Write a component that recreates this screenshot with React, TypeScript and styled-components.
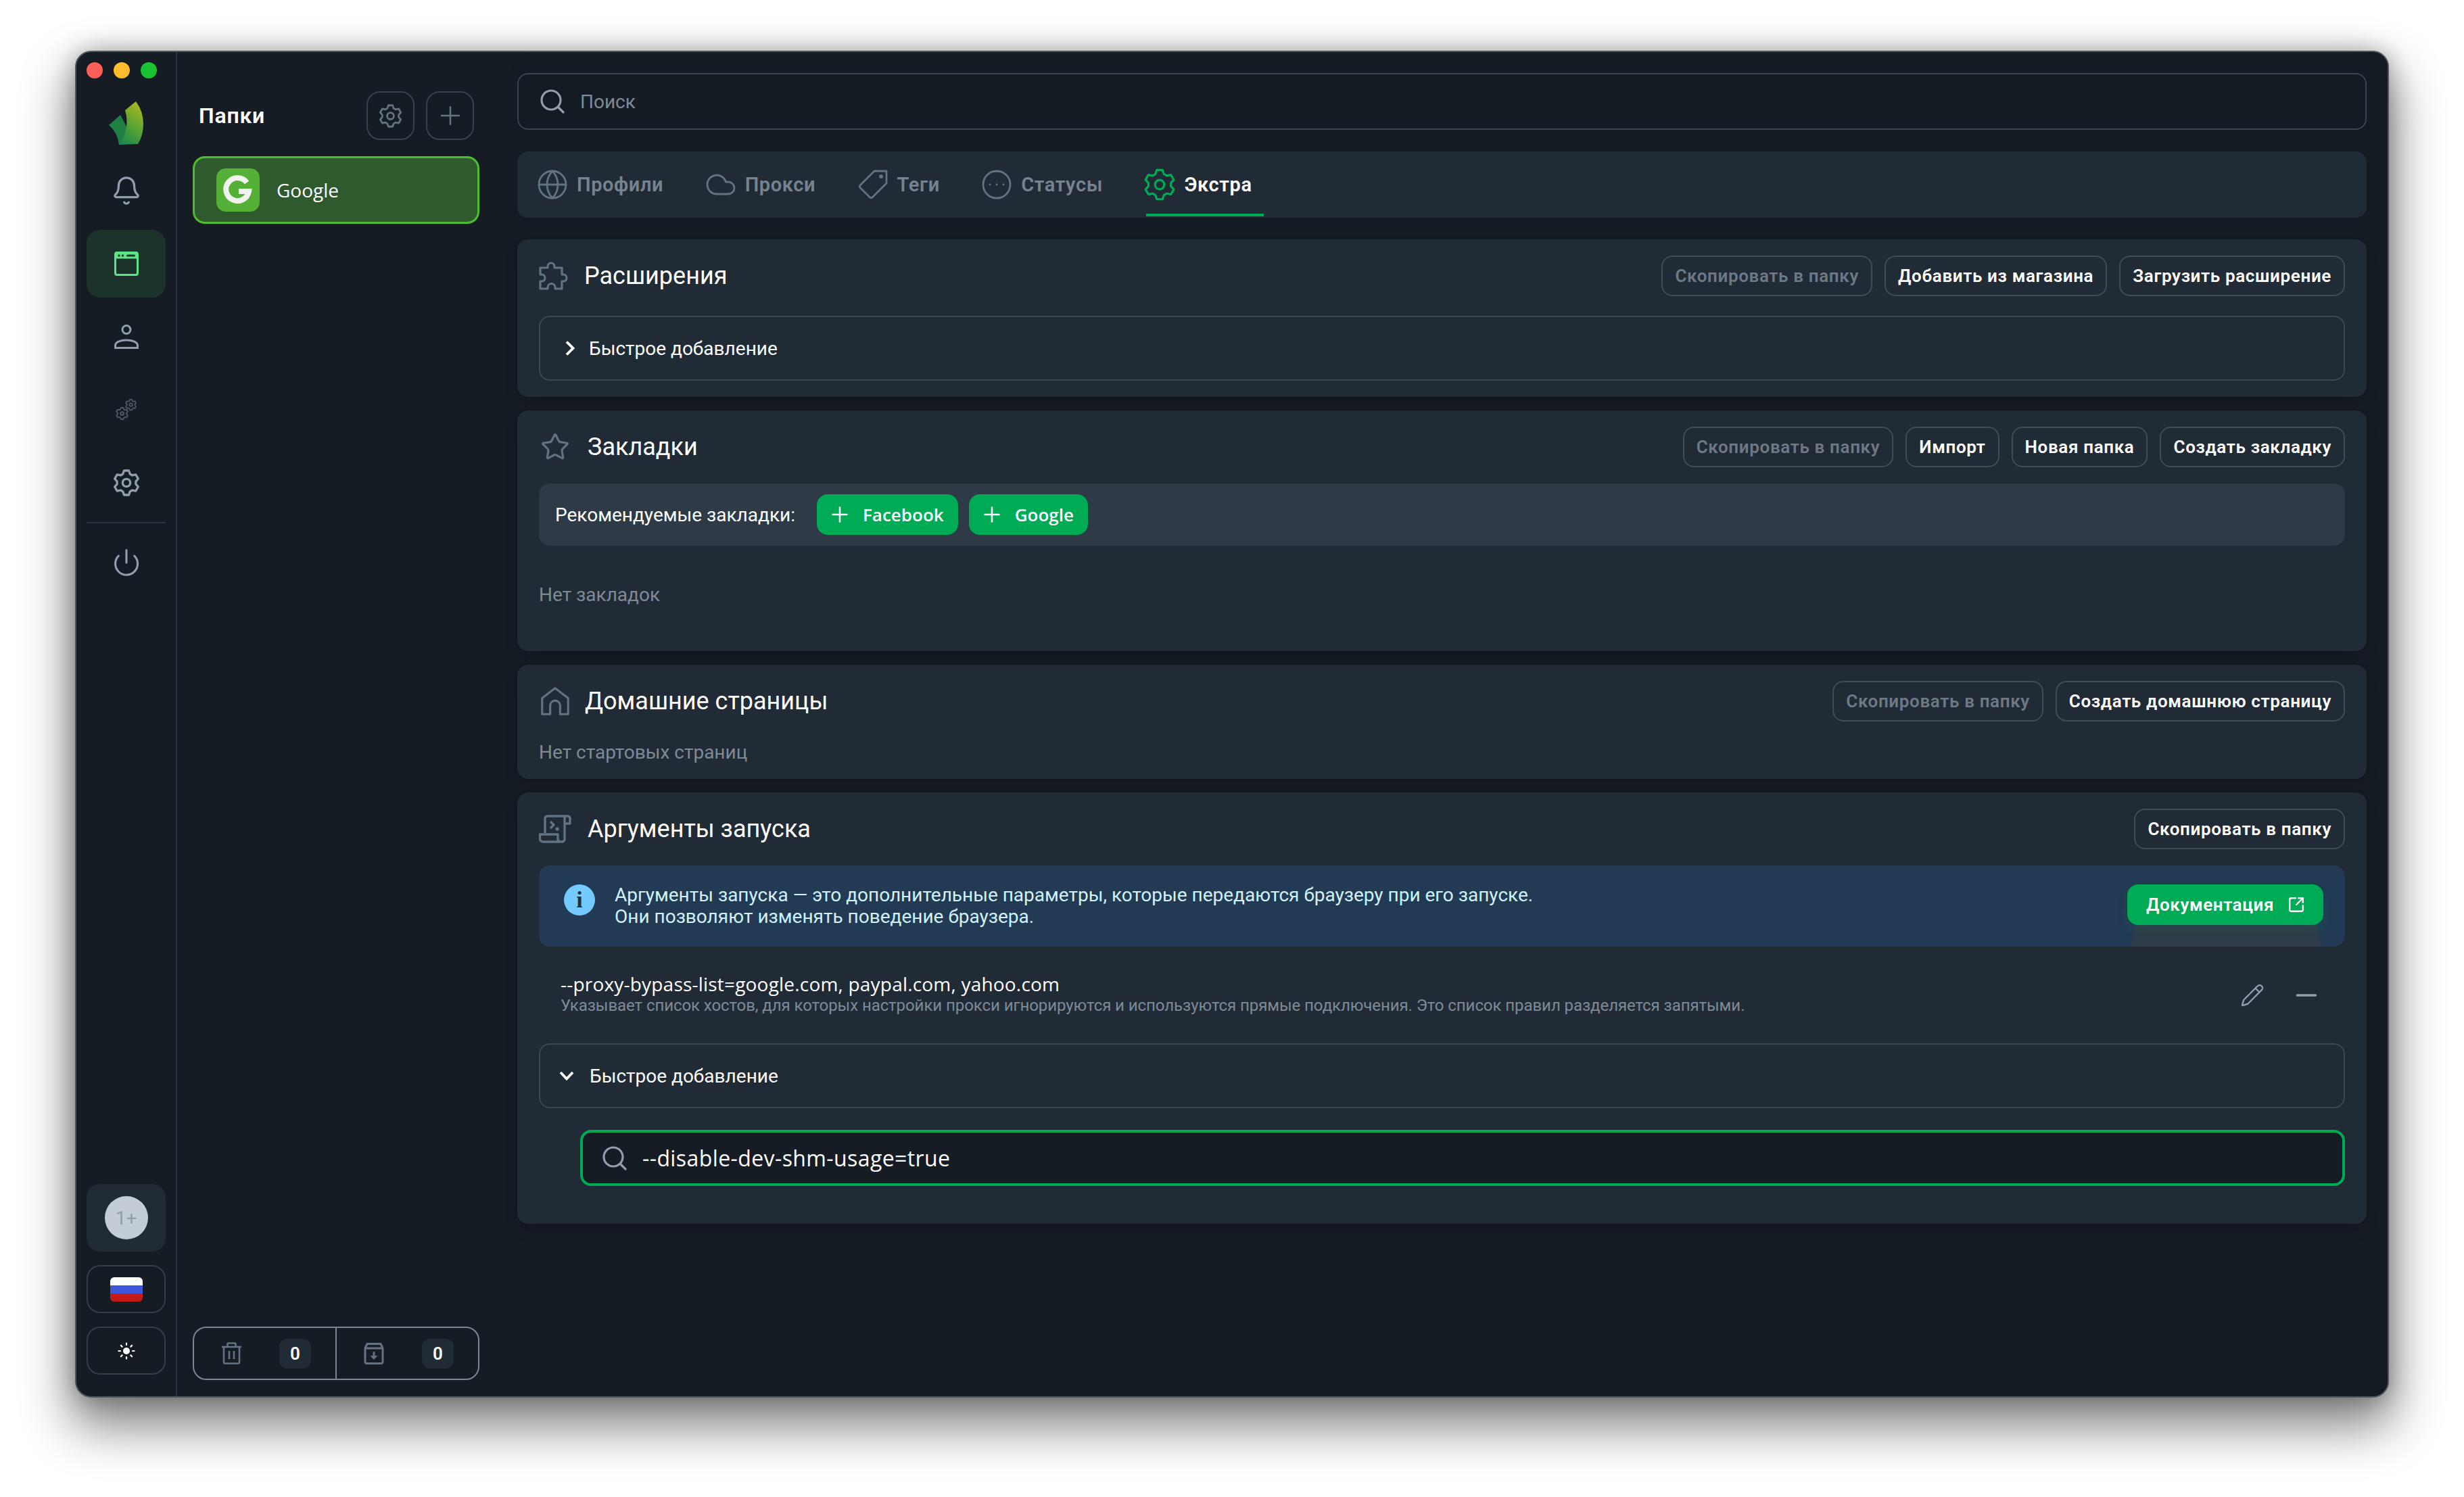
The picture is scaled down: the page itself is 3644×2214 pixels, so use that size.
import { createGlobalStyle, styled } from 'styled-components';
import {
  Bell,
  CircleEllipsis,
  Cloud,
  Globe,
  Minus,
  Pencil,
  Plus,
  Power,
  SquareArrowOutUpRight,
  Star,
} from 'lucide-react';

const FONT = `Roboto, "Noto Sans", sans-serif`;
const LATIN_FONT = `"Open Sans", Roboto, sans-serif`;

const GlobalStyle = createGlobalStyle`
  * { box-sizing: border-box; }
  html, body { margin: 0; background: #fff; }
  body { font-family: ${FONT}; }
`;

const Page = styled.div`
  width: 3644px;
  height: 2214px;
  padding: 75px 0 0 111px;
  background: #fff;
  overflow: hidden;
`;

const Window = styled.div`
  display: flex;
  width: 3422px;
  height: 1992px;
  border: 2px solid #4e555c;
  border-radius: 24px;
  background: #161c24;
  overflow: hidden;
  box-shadow: 0 36px 72px 8px rgba(0, 0, 0, 0.48), 0 0 34px rgba(0, 0, 0, 0.28);
`;

const Rail = styled.aside`
  display: flex;
  flex-direction: column;
  flex: none;
  width: 149px;
  padding: 15px 15px 32px;
  border-right: 2px solid #2a343f;
  color: #919eab;
`;

const Lights = styled.div`
  display: flex;
  gap: 16px;
  height: 24px;
`;

const Light = styled.span<{ $color: string }>`
  width: 24px;
  height: 24px;
  border-radius: 50%;
  background: ${(p) => p.$color};
`;

const LogoBox = styled.div`
  display: flex;
  justify-content: center;
  height: 65px;
  margin: 34px 0 17px;
`;

const NavList = styled.nav`
  display: flex;
  flex-direction: column;
  gap: 8px;
`;

const NavItem = styled.div<{ $active?: boolean; $muted?: boolean }>`
  display: flex;
  align-items: center;
  justify-content: center;
  height: 100px;
  border-radius: 20px;
  background: ${(p) => (p.$active ? '#1b332b' : 'transparent')};
  color: ${(p) => (p.$active ? '#5be584' : p.$muted ? '#4f5a66' : '#919eab')};
`;

const RailDivider = styled.div`
  height: 2px;
  background: #2a343f;
`;

const RailBottom = styled.div`
  display: flex;
  flex-direction: column;
  gap: 20px;
  margin-top: auto;
`;

const AvatarBox = styled.div`
  display: flex;
  align-items: center;
  justify-content: center;
  height: 100px;
  border-radius: 20px;
  background: #212b36;
`;

const Avatar = styled.div`
  display: flex;
  align-items: center;
  justify-content: center;
  width: 64px;
  height: 64px;
  border-radius: 50%;
  background: #c4cdd5;
  color: #919eab;
  font-size: 28px;
`;

const RailButton = styled.div`
  display: flex;
  align-items: center;
  justify-content: center;
  height: 71px;
  border: 2px solid #343d49;
  border-radius: 20px;
  color: #fff;
`;

const Flag = styled.div`
  width: 48px;
  height: 36px;
  border-radius: 6px;
  background: linear-gradient(#fff 0 33.3%, #3f57db 33.3% 66.6%, #c61a17 66.6%);
`;

const Folders = styled.section`
  display: flex;
  flex-direction: column;
  flex: none;
  width: 490px;
  padding: 58px 43px 24px 23px;
`;

const FolderHead = styled.div`
  display: flex;
  align-items: center;
  gap: 17px;
  height: 72px;
  padding: 0 8px 0 9px;
  margin-bottom: 24px;
`;

const FolderTitle = styled.h2`
  flex: 1;
  margin: 0;
  color: #fff;
  font-size: 32px;
  font-weight: 600;
  letter-spacing: 0.8px;
`;

const IconButton = styled.div`
  display: flex;
  align-items: center;
  justify-content: center;
  width: 71px;
  height: 72px;
  border: 2px solid #38414c;
  border-radius: 20px;
  color: #637381;
`;

const FolderItem = styled.div`
  display: flex;
  align-items: center;
  gap: 25px;
  height: 100px;
  padding-left: 32px;
  border: 3px solid #4cbf2e;
  border-radius: 18px;
  background: #2f5a2d;
  color: #fff;
  font-family: ${LATIN_FONT};
  font-size: 28px;
`;

const FolderLogo = styled.div`
  display: flex;
  align-items: center;
  justify-content: center;
  width: 64px;
  height: 64px;
  border-radius: 14px;
  background: #54b036;
`;

const FolderFooter = styled.div`
  display: flex;
  height: 79px;
  margin-top: auto;
  border: 2px solid #7b8793;
  border-radius: 20px;
`;

const FooterCell = styled.div`
  display: flex;
  flex: 1;
  align-items: center;
  justify-content: space-between;
  padding: 0 36px 0 40px;
  color: #637381;

  & + & {
    border-left: 2px solid #7b8793;
  }
`;

const CountBadge = styled.span`
  display: flex;
  align-items: center;
  justify-content: center;
  width: 47px;
  height: 44px;
  border-radius: 12px;
  background: #212b36;
  color: #fff;
  font-size: 26px;
  font-weight: 600;
`;

const Main = styled.main`
  display: flex;
  flex-direction: column;
  flex: 1;
  min-width: 0;
  padding: 31px 31px 0 13px;
  background: #151b23;
  border-top-left-radius: 40px;
`;

const SearchField = styled.label`
  display: flex;
  flex: none;
  align-items: center;
  gap: 23px;
  height: 84px;
  margin-bottom: 32px;
  padding-left: 32px;
  border: 2px solid #3a444f;
  border-radius: 16px;
  color: #919eab;
`;

const SearchInput = styled.input`
  flex: 1;
  padding: 0;
  border: 0;
  outline: 0;
  background: transparent;
  color: #fff;
  font-family: ${FONT};
  font-size: 28px;

  &::placeholder {
    color: #7e8a96;
    opacity: 1;
  }
`;

const TabBar = styled.div`
  display: flex;
  flex: none;
  gap: 47.5px;
  height: 98px;
  margin-bottom: 32px;
  padding-left: 32px;
  border-radius: 16px;
  background: #212b36;
`;

const Tab = styled.div<{ $active?: boolean }>`
  position: relative;
  display: flex;
  align-items: center;
  gap: 16px;
  padding-right: 17px;
  color: ${(p) => (p.$active ? '#fff' : '#77838f')};
  font-size: 29px;
  font-weight: 600;
  letter-spacing: 0.6px;

  svg {
    margin: -4px;
    color: ${(p) => (p.$active ? '#00ab55' : '#637381')};
  }

  ${(p) =>
    p.$active &&
    `&::after {
      content: '';
      position: absolute;
      left: 0;
      right: 0;
      bottom: 2px;
      height: 4px;
      background: #00ab55;
    }`}
`;

const Card = styled.section<{ $bottom?: number }>`
  flex: none;
  margin-bottom: 20px;
  padding: 24px 32px ${(p) => p.$bottom ?? 24}px;
  border-radius: 16px;
  background: #212b36;
  box-shadow: 0 0 2px rgba(0, 0, 0, 0.2), 0 12px 24px -4px rgba(0, 0, 0, 0.12);
`;

const CardHead = styled.header`
  display: flex;
  align-items: center;
  height: 60px;
  margin-bottom: 24px;
`;

const CardIcon = styled.div`
  display: flex;
  flex: none;
  align-items: center;
  justify-content: center;
  width: 48px;
  height: 48px;
  color: #637381;

  svg {
    flex: none;
  }
`;

const CardTitle = styled.h3<{ $gap: number }>`
  flex: 1;
  margin: 0 0 0 ${(p) => p.$gap}px;
  color: #fff;
  font-size: 36px;
  font-weight: 400;
`;

const ButtonRow = styled.div`
  display: flex;
  gap: 18px;
`;

const Button = styled.button<{ $disabled?: boolean }>`
  height: 60px;
  padding: 0 18px;
  border: 2px solid #414c58;
  border-radius: 16px;
  background: transparent;
  color: ${(p) => (p.$disabled ? '#6d7985' : '#fff')};
  font-family: ${FONT};
  font-size: 26px;
  font-weight: 600;
  letter-spacing: 0.65px;
  white-space: nowrap;
`;

const QuickAdd = styled.div<{ $open?: boolean; $top?: number }>`
  display: flex;
  align-items: center;
  gap: ${(p) => (p.$open ? 23 : 20)}px;
  height: 96px;
  margin-top: ${(p) => p.$top ?? 0}px;
  padding-left: ${(p) => (p.$open ? 28 : 36)}px;
  border: 2px solid #3d4853;
  border-radius: 16px;
  color: #fff;
  font-size: 28px;
`;

const RecommendBar = styled.div`
  display: flex;
  align-items: center;
  height: 92px;
  padding-left: 24px;
  border-radius: 16px;
  background: #2e3a46;
  color: #fff;
  font-size: 28px;
`;

const RecommendLabel = styled.span`
  margin-right: 32px;
`;

const GreenButton = styled.button`
  display: flex;
  align-items: center;
  gap: 23px;
  height: 60px;
  padding: 0 21px 0 23px;
  border: 0;
  border-radius: 16px;
  background: #00ab55;
  color: #fff;
  font-family: ${LATIN_FONT};
  font-size: 26px;
  font-weight: 600;
  white-space: nowrap;

  & + & {
    margin-left: 16px;
  }
`;

const PlusMark = styled(Plus)`
  margin: -7px;
`;

const EmptyText = styled.p<{ $top: number }>`
  margin: ${(p) => p.$top}px 0 0;
  color: #7e8a96;
  font-size: 28px;
  line-height: 36px;
`;

const InfoBox = styled.div`
  position: relative;
  display: flex;
  align-items: center;
  height: 120px;
  padding: 0 32px 0 37px;
  border-radius: 16px;
  background: #223a53;
  color: #d0f2ff;
  overflow: hidden;
`;

const InfoDot = styled.div`
  display: flex;
  flex: none;
  align-items: center;
  justify-content: center;
  width: 46px;
  height: 46px;
  margin: -18px 29px 0 0;
  border-radius: 50%;
  background: #74caff;
  color: #17324a;
  font-family: "Liberation Serif", serif;
  font-size: 34px;
  font-weight: 700;
`;

const InfoText = styled.p`
  flex: 1;
  margin: 0;
  font-size: 28px;
  line-height: 32px;
`;

const DocGhost = styled.div`
  position: absolute;
  right: 35px;
  top: 86px;
  width: 282px;
  height: 34px;
  background: #2e3c49;
  clip-path: polygon(3% 0, 97% 0, 100% 100%, 0 100%);
`;

const DocButton = styled(GreenButton)`
  position: relative;
  gap: 20px;
  margin-top: -4px;
  padding: 0 27px 0 28px;
  font-family: ${FONT};
  letter-spacing: 0.6px;
  box-shadow: 0 8px 16px rgba(0, 171, 85, 0.12);
`;

const ArgRow = styled.div`
  display: flex;
  align-items: center;
  height: 143px;
  padding: 0 42px 0 32px;
`;

const ArgText = styled.div`
  flex: 1;
  margin-top: -3px;
`;

const ArgName = styled.div`
  color: #fff;
  font-family: ${LATIN_FONT};
  font-size: 28px;
  letter-spacing: 0.2px;
  line-height: 34px;
`;

const ArgHint = styled.div`
  color: #7e8a96;
  font-size: 24px;
  letter-spacing: -0.07px;
  line-height: 30px;
`;

const ArgActions = styled.div`
  display: flex;
  align-items: center;
  gap: 55px;
  color: #919eab;

  svg {
    margin: -8px;
  }
`;

const FocusField = styled(SearchField)`
  height: 83px;
  margin: 32px 0 0 61px;
  padding-left: 29px;
  border: 4px solid #00ab55;
  background: #161c24;

  input {
    font-family: ${LATIN_FONT};
    font-size: 32px;
    letter-spacing: 0.4px;
  }
`;

function gearPath() {
  const pts: string[] = [];
  for (let i = 0; i < 6; i++) {
    const a = -90 + i * 60;
    const rows: [number, number][] = [
      [-22, 8.4],
      [-11, 11],
      [11, 11],
      [22, 8.4],
    ];
    rows.forEach(([d, r]) => {
      const t = ((a + d) * Math.PI) / 180;
      pts.push(`${(12 + r * Math.cos(t)).toFixed(2)} ${(12 + r * Math.sin(t)).toFixed(2)}`);
    });
  }
  return `M${pts.join('L')}Z`;
}

const GEAR = gearPath();

function Gear({ size, stroke = 2 }: { size: number; stroke?: number }) {
  return (
    <svg width={size} height={size} viewBox="0 0 24 24" fill="none" stroke="currentColor" strokeWidth={stroke} strokeLinejoin="round">
      <path d={GEAR} />
      <circle cx="12" cy="12" r="3.4" />
    </svg>
  );
}

function Logo() {
  return (
    <svg width="51" height="65" viewBox="0 0 51 65">
      <defs>
        <linearGradient id="leafA" x1="0.7" y1="0" x2="0.3" y2="1">
          <stop offset="0" stopColor="#a9b81f" />
          <stop offset="0.5" stopColor="#5fa532" />
          <stop offset="1" stopColor="#1f8a4d" />
        </linearGradient>
      </defs>
      <path d="M0 35 17 20 26 37V62L15 64Q13 46 0 35Z" fill="#1f7f45" />
      <path d="M40 0 24 13Q32 40 15 64L43 63Q51 50 51 33 51 15 40 0Z" fill="url(#leafA)" />
    </svg>
  );
}

function GoogleMark() {
  return (
    <svg width="44" height="44" viewBox="0 0 44 44" fill="none" stroke="#f1f3f1" strokeWidth="8">
      <path d="M35 11A17 17 0 1 0 38 24H23" />
    </svg>
  );
}

function BrowserIcon() {
  return (
    <svg width="36" height="36" viewBox="0 0 36 36" fill="none">
      <rect x="1.5" y="1.5" width="33" height="33" rx="2.5" stroke="currentColor" strokeWidth="3" />
      <rect x="1.5" y="1.5" width="33" height="9" fill="currentColor" />
      <circle cx="7" cy="6" r="1.7" fill="#1b332b" />
      <circle cx="12.5" cy="6" r="1.7" fill="#1b332b" />
      <rect x="18" y="4.4" width="13" height="3.2" rx="1.6" fill="#1b332b" />
    </svg>
  );
}

function PersonIcon() {
  return (
    <svg width="36" height="36" viewBox="0 0 36 36" fill="none" stroke="currentColor" strokeWidth="3">
      <circle cx="18" cy="7.5" r="6" />
      <path d="M1.5 34.5V31C1.5 26 9 23 18 23S34.5 26 34.5 31V34.5Z" />
    </svg>
  );
}

function GearsIcon() {
  return (
    <svg width="32" height="32" viewBox="0 0 32 32" fill="none" stroke="currentColor" strokeWidth="2.4" strokeLinejoin="round">
      <g transform="translate(0 12) scale(0.8)">
        <path d={GEAR} />
        <circle cx="12" cy="12" r="3" />
      </g>
      <g transform="translate(14 0) scale(0.72)">
        <path d={GEAR} />
        <circle cx="12" cy="12" r="3" />
      </g>
    </svg>
  );
}

function SunIcon() {
  return (
    <svg width="26" height="26" viewBox="0 0 26 26" stroke="#fff" strokeWidth="2.2" strokeLinecap="round" fill="#fff">
      <circle cx="13" cy="13" r="5" stroke="none" />
      <path d="M13 1.5V4M13 22v2.5M1.5 13H4M22 13h2.5M4.9 4.9 6.6 6.6M19.4 19.4l1.7 1.7M4.9 21.1l1.7-1.7M19.4 6.6l1.7-1.7" />
    </svg>
  );
}

function TrashIcon() {
  return (
    <svg width="31" height="33" viewBox="0 0 31 33" fill="none" stroke="currentColor" strokeWidth="2.6" strokeLinejoin="round">
      <path d="M1 7H30" />
      <path d="M9.500 7V3A1.500 1.500 0 0 1 11 1.500H20A1.500 1.500 0 0 1 21.500 3V7" />
      <path d="M4 7V29.500A2 2 0 0 0 6 31.500H25A2 2 0 0 0 27 29.500V7" />
      <path d="M12 13V25M19 13V25" />
    </svg>
  );
}

function ArchiveIcon() {
  return (
    <svg width="30" height="33" viewBox="0 0 30 33" fill="none" stroke="currentColor" strokeWidth="3">
      <path d="M2 9H28V29A2.500 2.500 0 0 1 25.500 31.500H4.500A2.500 2.500 0 0 1 2 29ZM2 9 5 2.500H25L28 9" strokeLinejoin="round" />
      <path d="M15 14V22" />
      <path d="M9.500 20H20.500L15 26Z" fill="currentColor" stroke="none" />
    </svg>
  );
}

function TagIcon() {
  return (
    <svg width="48" height="48" viewBox="0 0 24 24" fill="none" stroke="currentColor" strokeWidth="1.4" strokeLinejoin="round">
      <path d="M13 2h9v9L11.500 21.500a1.200 1.200 0 0 1-1.700 0L2.500 14.200a1.200 1.200 0 0 1 0-1.700Z" />
      <circle cx="18" cy="6" r=".8" fill="currentColor" />
    </svg>
  );
}

function PuzzleIcon() {
  return (
    <svg width="48" height="44" viewBox="0 0 48 44" fill="none" stroke="currentColor" strokeWidth="3.2" strokeLinejoin="round">
      <path d="M2 10H13V8A5 5 0 0 1 23 8V10H34V20H36A5 5 0 0 1 36 30H34V41H24V39A5.500 5.500 0 0 0 13 39V41H2V30H4A5 5 0 0 0 4 20H2Z" />
    </svg>
  );
}

function HomeIcon() {
  return (
    <svg width="44" height="44" viewBox="0 0 24 24" fill="none" stroke="currentColor" strokeWidth="1.7" strokeLinejoin="round">
      <path d="M1.500 22.500V9.500L12 1.500 22.500 9.500V22.500H16V15.500A4 4 0 0 0 8 15.500V22.500Z" />
    </svg>
  );
}

function ScrollIcon() {
  return (
    <svg width="48" height="42" viewBox="0 0 48 42" fill="none" stroke="currentColor" strokeWidth="3.4" strokeLinejoin="round">
      <path d="M9 27V5.500A3.500 3.500 0 0 1 12.500 2H43A3 3 0 0 1 46 5V13H38" />
      <path d="M38 3V36A4 4 0 0 1 34 40H6A4.500 4.500 0 0 1 1.500 35.500V29H28V35A4.500 4.500 0 0 0 33 40" />
      <path d="M17 10 22 15 17 20" />
      <circle cx="27" cy="21" r="1" fill="currentColor" />
    </svg>
  );
}

function SearchGlass() {
  return (
    <svg width="36" height="36" viewBox="0 0 36 36" fill="none" stroke="currentColor" strokeWidth="3.2" strokeLinecap="round">
      <circle cx="16" cy="16" r="14" />
      <path d="M26.500 26.500 34 34" />
    </svg>
  );
}

function ChevronRight() {
  return (
    <svg width="16" height="24" viewBox="0 0 16 24" fill="none" stroke="#fff" strokeWidth="3.8">
      <path d="M3 2.500 12.500 12 3 21.500" />
    </svg>
  );
}

function ChevronDown() {
  return (
    <svg width="22" height="14" viewBox="0 0 22 14" fill="none" stroke="#fff" strokeWidth="3.8">
      <path d="M2 2 11 11.500 20 2" />
    </svg>
  );
}

const tabs = [
  { label: 'Профили', icon: <Globe size={48} strokeWidth={1.4} /> },
  { label: 'Прокси', icon: <Cloud size={48} strokeWidth={1.4} /> },
  { label: 'Теги', icon: <TagIcon /> },
  { label: 'Статусы', icon: <CircleEllipsis size={48} strokeWidth={1.4} /> },
  { label: 'Экстра', icon: <Gear size={48} stroke={1.6} />, active: true },
];

export default function App() {
  return (
    <>
      <GlobalStyle />
      <Page>
        <Window>
          <Rail>
            <Lights>
              <Light $color="#ff5f57" />
              <Light $color="#febc2e" />
              <Light $color="#19c332" />
            </Lights>
            <LogoBox>
              <Logo />
            </LogoBox>
            <NavList>
              <NavItem><Bell size={46} strokeWidth={1.7} /></NavItem>
              <NavItem $active><BrowserIcon /></NavItem>
              <NavItem><PersonIcon /></NavItem>
              <NavItem $muted><GearsIcon /></NavItem>
              <NavItem><Gear size={40} stroke={2} /></NavItem>
              <RailDivider />
              <NavItem><Power size={44} strokeWidth={1.7} /></NavItem>
            </NavList>
            <RailBottom>
              <AvatarBox>
                <Avatar>1+</Avatar>
              </AvatarBox>
              <RailButton>
                <Flag />
              </RailButton>
              <RailButton>
                <SunIcon />
              </RailButton>
            </RailBottom>
          </Rail>

          <Folders>
            <FolderHead>
              <FolderTitle>Папки</FolderTitle>
              <IconButton><Gear size={35} stroke={1.9} /></IconButton>
              <IconButton><Plus size={44} strokeWidth={1.4} /></IconButton>
            </FolderHead>
            <FolderItem>
              <FolderLogo><GoogleMark /></FolderLogo>
              Google
            </FolderItem>
            <FolderFooter>
              <FooterCell>
                <TrashIcon />
                <CountBadge>0</CountBadge>
              </FooterCell>
              <FooterCell>
                <ArchiveIcon />
                <CountBadge>0</CountBadge>
              </FooterCell>
            </FolderFooter>
          </Folders>

          <Main>
            <SearchField>
              <SearchGlass />
              <SearchInput placeholder="Поиск" readOnly />
            </SearchField>

            <TabBar>
              {tabs.map((tab) => (
                <Tab key={tab.label} $active={tab.active}>
                  {tab.icon}
                  {tab.label}
                </Tab>
              ))}
            </TabBar>

            <Card>
              <CardHead>
                <CardIcon><PuzzleIcon /></CardIcon>
                <CardTitle $gap={19}>Расширения</CardTitle>
                <ButtonRow>
                  <Button $disabled>Скопировать в папку</Button>
                  <Button>Добавить из магазина</Button>
                  <Button>Загрузить расширение</Button>
                </ButtonRow>
              </CardHead>
              <QuickAdd $top={29}>
                <ChevronRight />
                Быстрое добавление
              </QuickAdd>
            </Card>

            <Card $bottom={65}>
              <CardHead>
                <CardIcon><Star size={44} strokeWidth={1.7} /></CardIcon>
                <CardTitle $gap={24}>Закладки</CardTitle>
                <ButtonRow>
                  <Button $disabled>Скопировать в папку</Button>
                  <Button>Импорт</Button>
                  <Button>Новая папка</Button>
                  <Button>Создать закладку</Button>
                </ButtonRow>
              </CardHead>
              <RecommendBar>
                <RecommendLabel>Рекомендуемые закладки:</RecommendLabel>
                <GreenButton><PlusMark size={36} strokeWidth={1.7} />Facebook</GreenButton>
                <GreenButton><PlusMark size={36} strokeWidth={1.7} />Google</GreenButton>
              </RecommendBar>
              <EmptyText $top={55}>Нет закладок</EmptyText>
            </Card>

            <Card $bottom={21}>
              <CardHead>
                <CardIcon><HomeIcon /></CardIcon>
                <CardTitle $gap={20}>Домашние страницы</CardTitle>
                <ButtonRow>
                  <Button $disabled>Скопировать в папку</Button>
                  <Button>Создать домашнюю страницу</Button>
                </ButtonRow>
              </CardHead>
              <EmptyText $top={28}>Нет стартовых страниц</EmptyText>
            </Card>

            <Card $bottom={56}>
              <CardHead>
                <CardIcon><ScrollIcon /></CardIcon>
                <CardTitle $gap={24}>Аргументы запуска</CardTitle>
                <Button>Скопировать в папку</Button>
              </CardHead>
              <InfoBox>
                <DocGhost />
                <InfoDot>i</InfoDot>
                <InfoText>
                  Аргументы запуска — это дополнительные параметры, которые передаются браузеру при его запуске.
                  <br />
                  Они позволяют изменять поведение браузера.
                </InfoText>
                <DocButton>
                  Документация
                  <SquareArrowOutUpRight size={26} strokeWidth={2.2} />
                </DocButton>
              </InfoBox>
              <ArgRow>
                <ArgText>
                  <ArgName>--proxy-bypass-list=google.com, paypal.com, yahoo.com</ArgName>
                  <ArgHint>Указывает список хостов, для которых настройки прокси игнорируются и используются прямые подключения. Это список правил разделяется запятыми.</ArgHint>
                </ArgText>
                <ArgActions>
                  <Pencil size={36} strokeWidth={1.6} />
                  <Minus size={46} strokeWidth={1.9} />
                </ArgActions>
              </ArgRow>
              <QuickAdd $open>
                <ChevronDown />
                Быстрое добавление
              </QuickAdd>
              <FocusField>
                <SearchGlass />
                <SearchInput defaultValue="--disable-dev-shm-usage=true" readOnly />
              </FocusField>
            </Card>
          </Main>
        </Window>
      </Page>
    </>
  );
}
